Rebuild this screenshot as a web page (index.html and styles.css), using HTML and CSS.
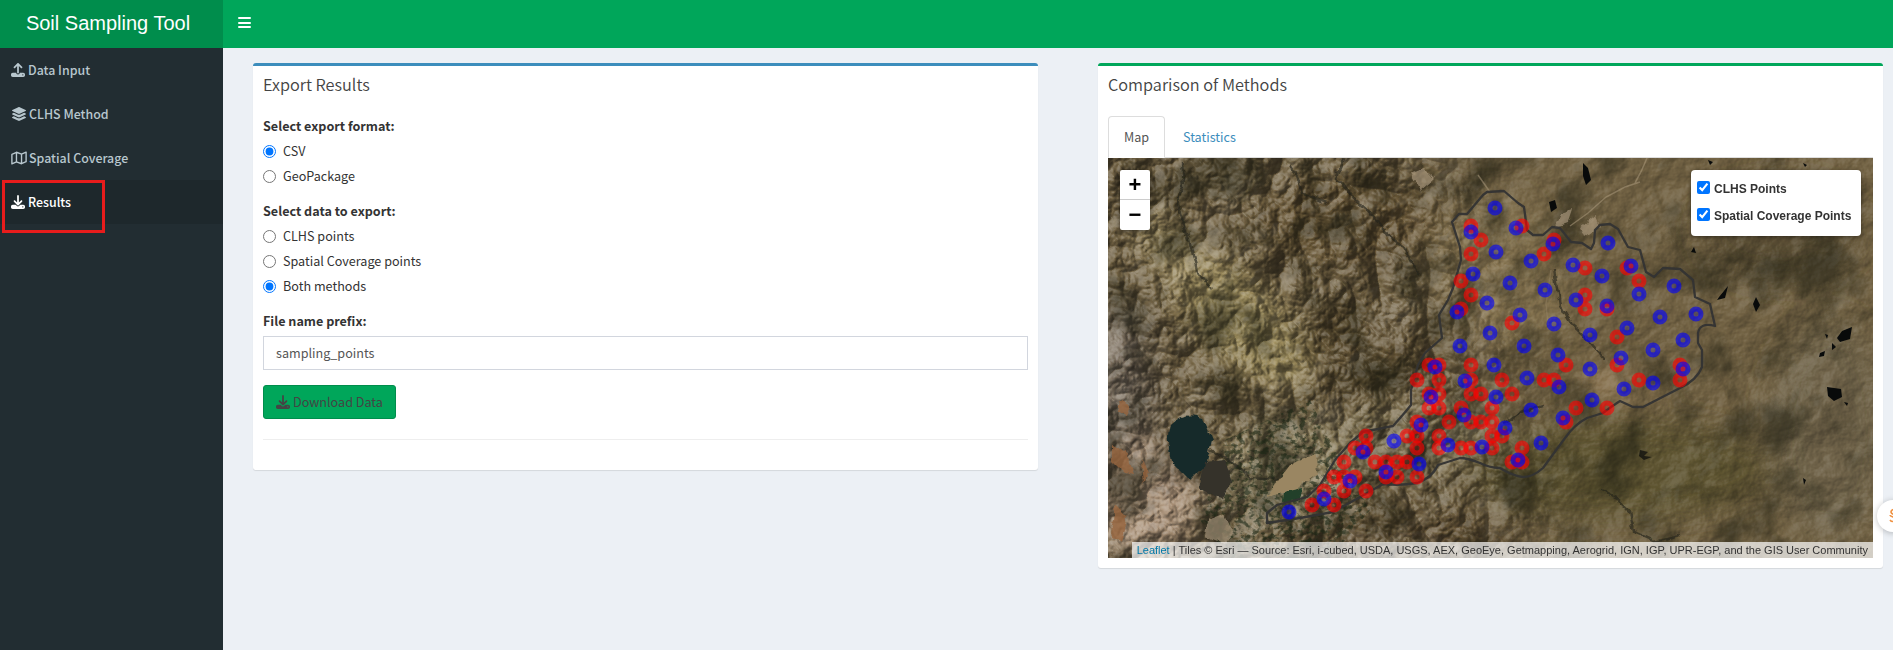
FILE: index.html
```html
<!DOCTYPE html>
<html lang="en">
<head>
<meta charset="utf-8">
<title>Soil Sampling Tool</title>
<link rel="stylesheet" href="styles.css">
</head>
<body>
<svg width="0" height="0" class="defs">
  <symbol id="i-upload" viewBox="0 0 512 512"><path d="M288 109.300V352c0 17.700-14.300 32-32 32s-32-14.300-32-32V109.300l-73.400 73.400c-12.500 12.500-32.800 12.500-45.300 0s-12.500-32.800 0-45.300l128-128c12.500-12.500 32.800-12.500 45.300 0l128 128c12.500 12.500 12.500 32.800 0 45.300s-32.800 12.500-45.300 0L288 109.300zM64 352H192c0 35.300 28.700 64 64 64s64-28.700 64-64H448c35.300 0 64 28.700 64 64v32c0 35.300-28.700 64-64 64H64c-35.300 0-64-28.700-64-64V416c0-35.300 28.700-64 64-64zM432 456a24 24 0 1 0 0-48 24 24 0 1 0 0 48z"/></symbol>
  <symbol id="i-download" viewBox="0 0 512 512"><path d="M288 32c0-17.700-14.300-32-32-32s-32 14.300-32 32V274.700l-73.400-73.400c-12.500-12.500-32.800-12.500-45.300 0s-12.500 32.800 0 45.300l128 128c12.500 12.500 32.800 12.500 45.300 0l128-128c12.500-12.500 12.500-32.800 0-45.300s-32.800-12.500-45.300 0L288 274.700V32zM64 352c-35.300 0-64 28.700-64 64v32c0 35.300 28.700 64 64 64H448c35.300 0 64-28.700 64-64V416c0-35.300-28.700-64-64-64H346.500l-45.300 45.300c-25 25-65.500 25-90.500 0L165.500 352H64zm368 56a24 24 0 1 1 0 48 24 24 0 1 1 0-48z"/></symbol>
  <symbol id="i-layers" viewBox="0 0 576 512"><path d="M264.500 5.200c14.900-6.900 32.100-6.900 47 0l218.600 101c8.500 3.900 13.900 12.400 13.900 21.800s-5.400 17.900-13.900 21.800l-218.600 101c-14.900 6.900-32.100 6.900-47 0L45.900 149.800C37.400 145.800 32 137.300 32 128s5.400-17.900 13.900-21.800L264.500 5.200zM476.900 209.600l53.200 24.600c8.500 3.900 13.900 12.400 13.900 21.800s-5.400 17.900-13.900 21.800l-218.600 101c-14.900 6.900-32.100 6.900-47 0L45.900 277.800C37.400 273.800 32 265.300 32 256s5.400-17.900 13.900-21.800l53.200-24.600 152 70.200c23.400 10.800 50.400 10.800 73.800 0l152-70.200zm-152 198.200l152-70.200 53.200 24.600c8.500 3.900 13.900 12.400 13.900 21.800s-5.400 17.900-13.900 21.800l-218.600 101c-14.900 6.900-32.100 6.900-47 0L45.900 405.800C37.400 401.800 32 393.300 32 384s5.400-17.900 13.900-21.800l53.200-24.600 152 70.200c23.400 10.800 50.400 10.800 73.800 0z"/></symbol>
  <symbol id="i-map" viewBox="0 0 576 512"><path fill="none" stroke="currentColor" stroke-width="50" stroke-linejoin="round" d="M28 120 195 46 381 114 548 40V392L381 466 195 398 28 472ZM195 46V398M381 114V466"/></symbol>
</svg>
<header class="topbar">
  <div class="brand">Soil Sampling Tool</div>
  <button class="toggle" aria-label="Toggle navigation"><i></i><i></i><i></i></button>
</header>
<div class="shell">
  <nav class="sidebar">
    <a><svg class="ic"><use href="#i-upload"/></svg>Data Input</a>
    <a><svg class="ic wide"><use href="#i-layers"/></svg>CLHS Method</a>
    <a><svg class="ic wide"><use href="#i-map"/></svg>Spatial Coverage</a>
    <a class="active"><svg class="ic"><use href="#i-download"/></svg>Results<span class="highlight"></span></a>
  </nav>
  <main class="content">
    <section class="box box-blue">
      <h3>Export Results</h3>
      <div class="box-body">
        <div class="group">
          <b>Select export format:</b>
          <label><input type="radio" name="fmt" checked>CSV</label>
          <label><input type="radio" name="fmt">GeoPackage</label>
        </div>
        <div class="group">
          <b>Select data to export:</b>
          <label><input type="radio" name="data">CLHS points</label>
          <label><input type="radio" name="data">Spatial Coverage points</label>
          <label><input type="radio" name="data" checked>Both methods</label>
        </div>
        <div class="group last">
          <b>File name prefix:</b>
          <input class="field" type="text" value="sampling_points">
        </div>
        <button class="download"><svg class="ic"><use href="#i-download"/></svg>Download Data</button>
        <hr>
      </div>
    </section>
    <section class="box box-green">
      <h3>Comparison of Methods</h3>
      <div class="box-body">
        <div class="tabs"><a class="on">Map</a><a>Statistics</a></div>
        <div class="map">
          <svg class="terrain" viewBox="1108 158 765 400">
            <defs>
              <filter id="relief" x="0" y="0" width="100%" height="100%" color-interpolation-filters="sRGB">
                <feTurbulence type="fractalNoise" baseFrequency=".013 .015" numOctaves="6" seed="14"/>
                <feDiffuseLighting surfaceScale="12" diffuseConstant=".66" lighting-color="#fff"><feDistantLight azimuth="215" elevation="48"/></feDiffuseLighting>
              </filter>
              <filter id="ridges" x="0" y="0" width="100%" height="100%" color-interpolation-filters="sRGB">
                <feTurbulence type="turbulence" baseFrequency=".013 .016" numOctaves="5" seed="5"/>
                <feDiffuseLighting surfaceScale="22" diffuseConstant=".74" lighting-color="#fff"><feDistantLight azimuth="170" elevation="44"/></feDiffuseLighting>
              </filter>
              <filter id="tint" x="0" y="0" width="100%" height="100%" color-interpolation-filters="sRGB">
                <feTurbulence type="fractalNoise" baseFrequency=".02" numOctaves="5" seed="9"/>
                <feColorMatrix values="0 0 0 0 .12  0 0 0 0 .12  0 0 0 0 .07  3.4 0 0 0 -1.6"/>
              </filter>
              <filter id="fields" x="0" y="0" width="100%" height="100%" color-interpolation-filters="sRGB">
                <feTurbulence type="fractalNoise" baseFrequency=".16 .2" numOctaves="3" seed="3"/>
                <feColorMatrix values="0 0 0 0 .1  0 0 0 0 .15  0 0 0 0 .08  5 0 0 0 -2.4"/>
                <feComposite in2="SourceAlpha" operator="in"/>
              </filter>
              <filter id="soft" x="-30%" y="-30%" width="160%" height="160%"><feGaussianBlur stdDeviation="14"/></filter>
              <filter id="edge" x="-20%" y="-20%" width="140%" height="140%"><feTurbulence type="fractalNoise" baseFrequency=".09" numOctaves="3" result="n"/><feDisplacementMap in="SourceGraphic" in2="n" scale="7" xChannelSelector="R" yChannelSelector="G"/><feGaussianBlur stdDeviation=".7"/></filter>
              <linearGradient id="fade" x1="0" x2="1" y1=".1" y2="0"><stop offset=".36" stop-color="#fff"/><stop offset=".55" stop-color="#000"/></linearGradient>
              <mask id="west"><rect x="1108" y="158" width="765" height="400" fill="url(#fade)"/></mask>
            </defs>
            <rect x="1108" y="158" width="765" height="400" fill="#736344"/>
            <g filter="url(#soft)">
              <ellipse cx="1120" cy="430" rx="38" ry="130" fill="#7d6f5f"/>
              <ellipse cx="1145" cy="500" rx="55" ry="60" fill="#aa9278"/>
              <ellipse cx="1240" cy="320" rx="90" ry="40" transform="rotate(45 1240 320)" fill="#a0905f"/>
              <ellipse cx="1170" cy="250" rx="50" ry="20" transform="rotate(50 1170 250)" fill="#a09064"/>
              <ellipse cx="1350" cy="220" rx="90" ry="45" fill="#6a5838"/>
              <ellipse cx="1360" cy="350" rx="55" ry="50" fill="#645234"/>
              <ellipse cx="1290" cy="470" rx="70" ry="55" fill="#8e815f"/>
              <ellipse cx="1420" cy="440" rx="110" ry="35" fill="#827553"/>
              <ellipse cx="1500" cy="270" rx="60" ry="80" transform="rotate(-30 1500 270)" fill="#85734f"/>
              <ellipse cx="1620" cy="470" rx="150" ry="50" fill="#5f5433"/>
              <ellipse cx="1400" cy="540" rx="120" ry="30" fill="#665537"/>
              <ellipse cx="1780" cy="230" rx="80" ry="50" fill="#5c5034"/>
              <ellipse cx="1830" cy="430" rx="60" ry="110" fill="#706348"/>
              <ellipse cx="1620" cy="382" rx="40" ry="12" fill="#987e59"/>
            </g>
            <rect x="1108" y="158" width="765" height="400" filter="url(#relief)" class="shade"/>
            <g mask="url(#west)" class="shade strong"><g transform="rotate(48 1300 350)"><rect x="900" y="-50" width="800" height="800" filter="url(#ridges)"/></g></g>
            <rect x="1108" y="158" width="765" height="400" filter="url(#tint)" opacity=".5"/>
            <path d="M1225 440 1310 400 1345 470 1370 510 1330 558H1230L1200 520Z" filter="url(#fields)" opacity=".6"/>
            <g filter="url(#edge)">
              <path d="M1170 425Q1185 410 1203 418L1212 440 1206 465 1190 481 1172 463Q1165 440 1170 425Z" fill="#182b2a"/>
              <path d="M1204 462 1226 460 1233 482 1222 499 1198 488Z" fill="#34322a"/>
              <path d="M1266 497 1290 465 1316 455 1317 473 1295 490Z" fill="#9a8662"/>
              <path d="M1284 492 1302 488 1300 500 1283 502Z" fill="#23412a"/>
              <path d="M1120 400l10 5-4 12-8-5zM1112 445l14 7 8 22-10-2-12-12zM1142 460l6 12-4 13zM1115 505l12 12-6 25-10-8z" fill="#97653e" opacity=".8"/>
              <path d="M1208 520l16-6 9 20-8 10-20-8zM1410 172l14-4 10 10-14 12zM1560 214l12-4-4 12-14 5zM1580 228l16-12 4 10-16 12z" fill="#b2a085" opacity=".6"/>
            </g>
            <g class="track"><path d="M1640 182 1625 187 1606 197 1588 213 1570 226M1647 158q-5 13-12 25M1478 175l12 17"/><path d="M1551 270 1546 304 1548 325" opacity=".5"/></g>
            <g class="gully" filter="url(#edge)"><path d="M1181 162l2 24-6 18 12 35 8 32 14 18M1290 165l7 10 5 19 26 8M1344 158l-8 20 20 22 18 16 14 20 16 12 14 26M1554 270l6 35 12 20 20 18 12 15M1543 405l-20 6-20 14M1600 490l18 10 12 12 4 20 20 9 25-6M1210 450l20 10 20 18 28 2"/></g>
            <g fill="#080a0a"><path d="M1583 163l5 5 3 12-5 5-3-9zM1549 202l6-2 2 8-6 4zM1756 297l4 8-4 7-3-8zM1842 331l10-4-2 12-10 3-3-4zM1832 343l4 4-4 3zM1820 353l5-2-1 5-5 1zM1827 387l14 2 1 8-8 4-6-5zM1844 402l4 1-1 3zM1708 160l5 2-3 3zM1691 252l3-5 2 6zM1719 297l9-11-3 12-8 2zM1803 163l4 2-2 2zM1803 478l3 2-2 5zM1825 334l3 1-1 4z"/><path d="M1640 450l8 2-4 4 8 1-8 3-5-4z" opacity=".7"/></g>
            <path class="boundary" d="M1452 222 1459 214 1467 214 1483 195 1487 192 1504 191 1518 203 1524 207 1527 230 1533 235H1543L1552 227 1560 228 1571 242 1582 243 1591 249 1594 243 1595 230 1600 225 1610 224 1618 229 1628 247 1640 250 1646 272 1654 277 1663 268 1680 269 1693 280 1695 297 1710 304 1715 326Q1700 322 1698 333L1698 343 1702 350V367Q1697 380 1680 388L1643 407H1633L1620 401Q1612 406 1603 413L1587 418Q1575 424 1565 438L1543 468Q1533 477 1523 477 1513 476 1500 468 1490 468 1480 463 1467 458 1460 458L1438 465Q1432 478 1417 483 1400 486 1383 484L1360 497 1333 512 1300 518 1267 523V513L1277 505 1307 497 1320 485 1335 460 1350 443 1363 432 1393 426Q1403 415 1411 405V390L1418 365 1425 353 1442 338 1439 315 1448 300 1453 288 1461 260 1460 247Z"/>
            <g id="points"></g>
          </svg>
          <div class="zoomer"><a>+</a><a>−</a></div>
          <div class="layers">
            <label><input type="checkbox" checked>CLHS Points</label>
            <label><input type="checkbox" checked>Spatial Coverage Points</label>
          </div>
          <div class="credit"><a>Leaflet</a> | Tiles © Esri — Source: Esri, i-cubed, USDA, USGS, AEX, GeoEye, Getmapping, Aerogrid, IGN, IGP, UPR-EGP, and the GIS User Community</div>
        </div>
      </div>
    </section>
  </main>
</div>
<div class="bubble"><svg viewBox="0 0 14 16"><path d="M11 3C9 0 3 1 3 4s7 3 7 6-6 5-8 2M2 7c0 2 6 2 6 4" fill="none" stroke="#ef9243" stroke-width="1.600"/></svg></div>
<script src="map.js"></script>
</body>
</html>
```
FILE: styles.css
```css
* { box-sizing: border-box; }
body { margin: 0; height: 650px; overflow: hidden; background: #ecf0f5; color: #333; font: 12.6px/20px "Noto Sans CJK SC", sans-serif; position: relative; }
.defs { position: absolute; }
.topbar { display: flex; height: 48px; background: #00a65a; }
.brand { width: 223px; background: #008d4c; color: #fff; font: 20px/46px "Liberation Sans", Arial, sans-serif; text-align: center; padding-right: 7px; }
.toggle { border: 0; background: none; padding: 17px 0 0 15px; display: flex; flex-direction: column; gap: 2.5px; }
.toggle i { width: 13px; height: 2px; background: #fff; border-radius: 1px; }
.shell { display: flex; height: 602px; }
.sidebar { width: 223px; background: #222d32; flex: none; }
.sidebar a { display: flex; align-items: center; height: 44px; padding: 0 0 0 11px; color: #b8c7ce; position: relative; font-weight: 500; font-size: 12.4px; }
.sidebar a.active { background: #1e282c; color: #fff; }
.ic { width: 14px; height: 14px; margin-right: 3px; fill: currentColor; flex: none; }
.sidebar .ic { margin: -1px 3px 0 0; }
.sidebar .ic.wide { width: 16px; margin-right: 2px; }
.highlight { position: absolute; left: 2px; top: 0; width: 103px; height: 53px; border: 3px solid #e81c1c; z-index: 2; }
.content { flex: 1; display: grid; grid-template-columns: 785px 785px; gap: 60px; padding: 15px 10px 0 30px; align-items: start; }
.box { background: #fff; border-top: 3px solid; border-radius: 3px; box-shadow: 0 1px 1px rgba(0,0,0,.1); }
.box-blue { border-color: #3c8dbc; }
.box-green { border-color: #00a65a; }
h3 { margin: 0; padding: 9px 10px; height: 40px; font-size: 16.3px; line-height: 18px; font-weight: 350; color: #444; }
.box-body { padding: 10px; }
.group { margin-bottom: 10px; }
.group.last { margin-bottom: 15px; }
.group b { display: block; height: 25px; }
.group label { display: flex; align-items: center; height: 25px; padding-bottom: 5px; }
input { margin: 0; }
.group label input { width: 13px; height: 13px; margin: 0 7px 0 0; }
.field { display: block; width: 100%; height: 34px; border: 1px solid #d2d6de; padding: 4px 12px 6px; font: inherit; color: #555; }
.download { display: flex; align-items: center; width: 133px; height: 34px; padding: 0 12px; background: #00a65a; border: 1px solid #008d4c; border-radius: 3px; font: inherit; color: #444; white-space: nowrap; }
hr { border: 0; border-top: 1px solid #eee; margin: 20px 0; }
.tabs { display: flex; gap: 2px; height: 42px; border-bottom: 1px solid #ddd; }
.tabs a { height: 42px; padding: 10px 15px; border: 1px solid transparent; color: #3c8dbc; }
.tabs .on { width: 57px; border-color: #ddd #ddd #fff; border-radius: 4px 4px 0 0; background: #fff; color: #555; }
.map { position: relative; height: 400px; overflow: hidden; background: #6a5c40; font-family: "Liberation Sans", Arial, sans-serif; }
.terrain { display: block; width: 765px; height: 400px; }
.shade { mix-blend-mode: hard-light; opacity: .4; }
.shade.strong { opacity: .5; }
.track { fill: none; stroke: #a9987a; stroke-width: 1.5; opacity: .55; }
.gully { fill: none; stroke: #22231a; stroke-width: 2.5; opacity: .6; }
.boundary { fill: none; stroke: #333; stroke-width: 2.3; stroke-linejoin: round; opacity: .95; }
.clhs { stroke: red; fill: red; }
.coverage { stroke: #00f; fill: #00f; }
.clhs, .coverage { stroke-width: 5; stroke-opacity: .6; fill-opacity: .15; }
.zoomer { position: absolute; left: 12px; top: 12px; width: 30px; height: 60px; background: #fff; border-radius: 2px; box-shadow: 0 1px 5px rgba(0,0,0,.65); font: bold 22px/30px "Liberation Sans", sans-serif; color: #000; text-align: center; }
.zoomer a { display: block; height: 30px; }
.zoomer a:first-child { border-bottom: 1px solid #ccc; }
.layers { position: absolute; right: 12px; top: 12px; width: 170px; height: 66px; padding: 11px 6px; background: #fff; border-radius: 4px; box-shadow: 0 1px 4px rgba(0,0,0,.4); font: bold 12px/16px "Liberation Sans", sans-serif; display: grid; grid-auto-rows: 27px; white-space: nowrap; }
.layers label { display: flex; align-items: flex-start; padding: 0; }
.layers input { width: 13px; height: 13px; margin-right: 4px; }
.credit { position: absolute; right: 0; bottom: 0; height: 16px; padding: 0 5px; font-size: 11px; line-height: 16px; background: rgba(255,255,255,.7); white-space: nowrap; }
.credit a { color: #0078a8; }
.bubble { position: absolute; left: 1877px; top: 500px; width: 32px; height: 32px; border-radius: 50%; background: #fff; box-shadow: 0 1px 6px rgba(0,0,0,.25); padding: 8px 0 0 11px; }
.bubble svg { width: 14px; height: 16px; }
```
FILE: map.js
```js
// Sampling point positions, grouped by method.
const clhs = [[1471,226],[1481,240],[1471,254],[1461,281],[1471,295],[1461,309],[1512,323],[1522,226],[1554,240],[1544,254],[1585,268],[1627,268],[1639,281],[1585,295],[1585,309],[1607,309],[1617,337],
[1429,365],[1439,365],[1471,365],[1566,365],[1680,365],[1617,365],[1417,380],[1439,380],[1471,380],[1502,380],[1544,380],[1554,380],[1639,380],[1680,380],
[1429,394],[1439,394],[1471,394],[1481,394],[1512,394],[1429,408],[1439,408],[1461,408],[1492,408],[1576,408],[1607,408],
[1417,422],[1449,422],[1471,422],[1481,422],[1492,422],[1566,422],[1366,436],[1407,436],[1417,436],[1439,436],[1492,436],[1502,436],
[1355,448],[1366,448],[1417,448],[1439,448],[1461,448],[1471,448],[1492,448],[1522,448],[1344,462],[1375,462],[1386,462],[1397,462],[1407,462],[1512,462],[1522,462],
[1334,477],[1344,477],[1355,477],[1386,477],[1397,477],[1417,477],[1324,491],[1344,491],[1366,491],[1312,505],[1334,505]];
const coverage = [[1495,208],[1471,232],[1516,228],[1496,252],[1553,244],[1531,261],[1573,265],[1608,243],[1631,266],[1602,276],[1674,286],[1473,274],[1510,283],[1545,290],[1576,300],[1639,294],[1487,303],[1457,312],[1520,315],[1554,324],[1607,306],[1660,317],[1696,314],[1627,328],[1590,335],[1490,333],
[1683,340],[1653,350],[1460,346],[1524,346],[1558,355],[1621,358],[1435,367],[1494,365],[1590,369],[1683,369],[1465,381],[1527,378],[1653,383],[1559,387],[1624,389],[1431,397],[1496,397],[1592,400],[1531,410],[1464,415],[1563,418],[1421,425],[1505,428],[1541,443],[1448,445],[1482,447],[1419,464],[1518,460],
[1394,441],[1363,452],[1386,472],[1350,481],[1324,499],[1289,512]];
const layer = document.getElementById("points");
for (const [name, list] of [["clhs", clhs], ["coverage", coverage]]) {
  for (const [x, y] of list) {
    const c = document.createElementNS("http://www.w3.org/2000/svg", "circle");
    c.setAttribute("class", name);
    c.setAttribute("cx", x);
    c.setAttribute("cy", y);
    c.setAttribute("r", 5);
    layer.append(c);
  }
}
```
